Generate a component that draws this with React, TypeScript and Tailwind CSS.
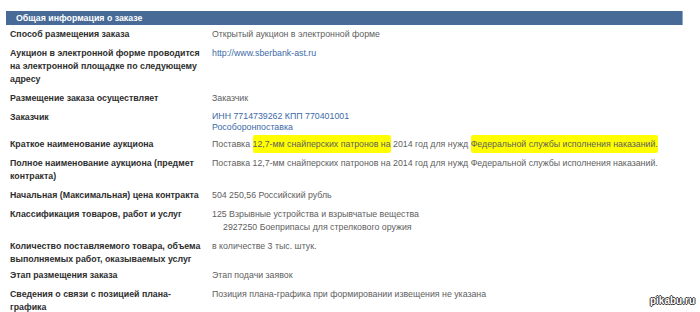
import React from 'react'

type Row = { label: React.ReactNode; value: React.ReactNode; tight?: boolean }

const rows: Row[] = [
  { label: 'Способ размещения заказа', value: 'Открытый аукцион в электронной форме' },
  {
    label: (
      <>
        Аукцион в электронной форме проводится
        <br />
        на электронной площадке по следующему
        <br />
        адресу
      </>
    ),
    value: <span className="text-[#3d6aa8]">http://www.sberbank-ast.ru</span>,
  },
  { label: 'Размещение заказа осуществляет', value: 'Заказчик' },
  {
    label: 'Заказчик',
    value: (
      <span className="text-[#3d6aa8] leading-[10.5px] block">
        ИНН 7714739262 КПП 770401001
        <br />
        Рособоронпоставка
      </span>
    ),
  },
  {
    label: 'Краткое наименование аукциона',
    value: (
      <>
        Поставка <Mark>12,7-мм снайперских патронов на</Mark> 2014 год для нужд{' '}
        <Mark>Федеральной службы исполнения наказаний.</Mark>
      </>
    ),
  },
  {
    label: (
      <>
        Полное наименование аукциона (предмет
        <br />
        контракта)
      </>
    ),
    value: 'Поставка 12,7-мм снайперских патронов на 2014 год для нужд Федеральной службы исполнения наказаний.',
  },
  { label: 'Начальная (Максимальная) цена контракта', value: '504 250,56 Российский рубль' },
  {
    label: 'Классификация товаров, работ и услуг',
    value: (
      <>
        125 Взрывные устройства и взрывчатые вещества
        <br />
        <span className="pl-[11px]">2927250 Боеприпасы для стрелкового оружия</span>
      </>
    ),
  },
  {
    label: (
      <>
        Количество поставляемого товара, объема
        <br />
        выполняемых работ, оказываемых услуг
      </>
    ),
    value: 'в количестве 3 тыс. штук.',
    tight: true,
  },
  { label: 'Этап размещения заказа', value: 'Этап подачи заявок' },
  {
    label: (
      <>
        Сведения о связи с позицией плана-
        <br />
        графика
      </>
    ),
    value: 'Позиция плана-графика при формировании извещения не указана',
  },
]

function Mark({ children }: { children: React.ReactNode }) {
  return <span className="bg-[#ffff00] py-[4px] rounded-[2px]">{children}</span>
}

export default function App() {
  return (
    <div className="relative w-[700px] h-[312px] bg-white overflow-hidden pt-[11px] text-[8.8px] leading-[13px] [font-family:'Liberation_Sans',Arial,sans-serif]">
      <div className="ml-[6px] w-[677px] h-[14px] bg-[#476a97] border-r border-[#8aa6c8] pl-[10px] text-white font-bold leading-[14px]">
        Общая информация о заказе
      </div>
      <div className="ml-[10px]">
        {rows.map((r, i) => (
          <div key={i} className={r.tight ? 'flex pt-[3px] pb-0' : 'flex py-[3px]'}>
            <div className="w-[202px] shrink-0 whitespace-nowrap font-bold text-[#2e2e2e]">{r.label}</div>
            <div className="flex-1 text-[#606060]">{r.value}</div>
          </div>
        ))}
      </div>
      <div className="absolute right-[5px] bottom-[5px] text-[10px] font-bold text-white [text-shadow:1px_0_#333,-1px_0_#333,0_1px_#333,0_-1px_#333]">
        pikabu.ru
      </div>
    </div>
  )
}
